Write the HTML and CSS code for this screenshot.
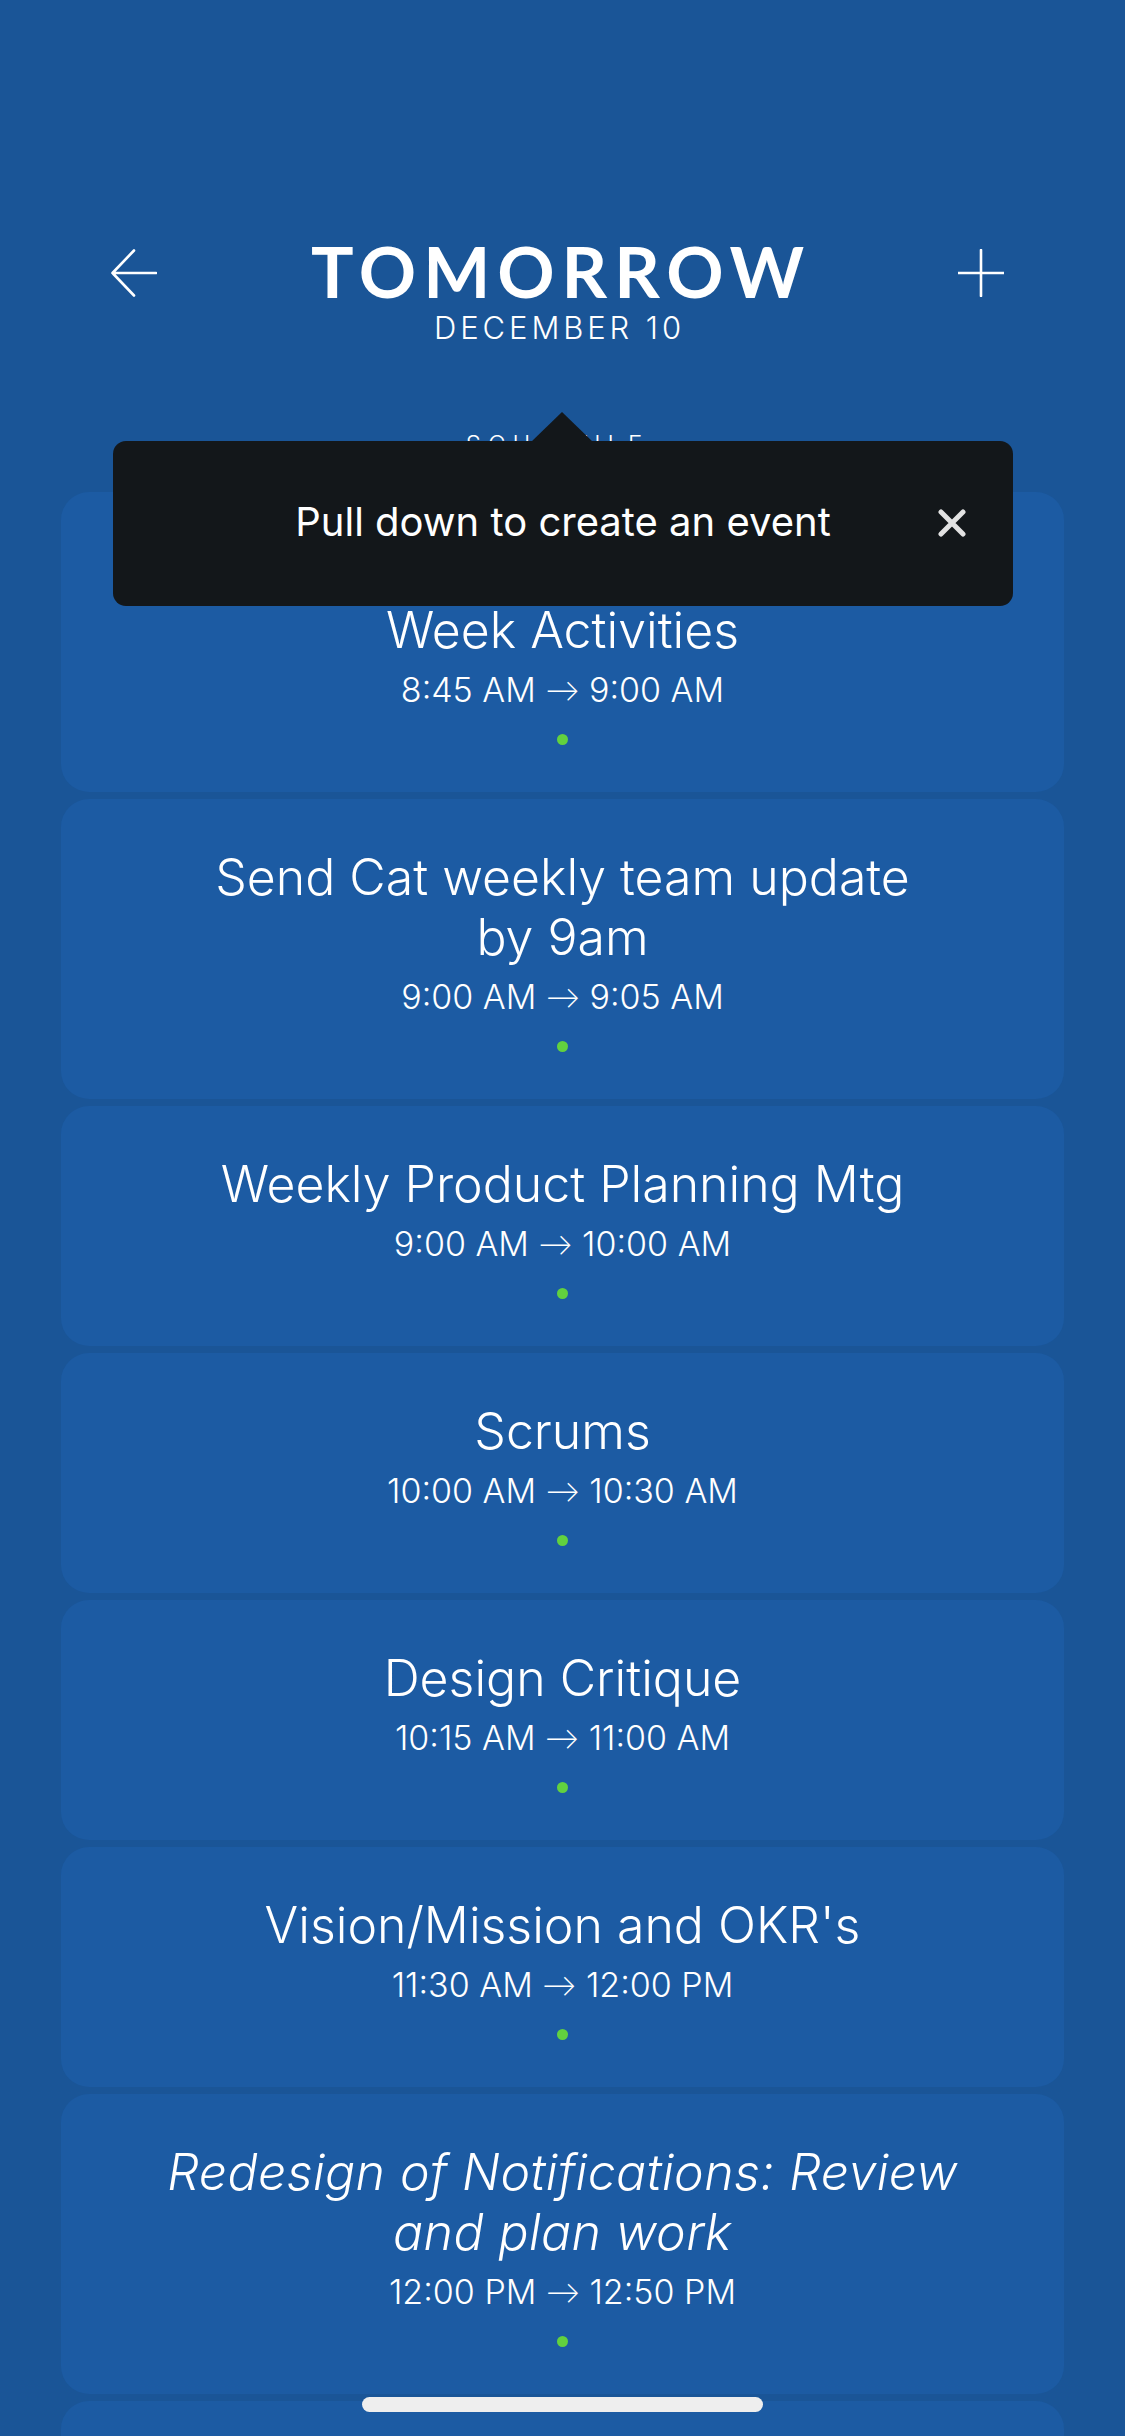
FILE: index.html
```html
<!DOCTYPE html>
<html lang="en">
<head>
<meta charset="utf-8">
<title>Tomorrow</title>
<link rel="stylesheet" href="styles.css">
</head>
<body>
<div class="screen">
  <header class="topbar">
    <div class="icon-btn">
      <svg width="46" height="48" viewBox="0 0 46 48" fill="none" stroke="#fff" stroke-width="2.6" stroke-linecap="round" stroke-linejoin="round"><path d="M23 1.5 L1.5 24 L23 46.5 M1.5 24 H45"/></svg>
    </div>
    <div class="heading">
      <h1 class="day">TOMORROW</h1>
      <div class="date">DECEMBER 10</div>
    </div>
    <div class="icon-btn">
      <svg width="46" height="48" viewBox="0 0 46 48" fill="none" stroke="#fff" stroke-width="2.6" stroke-linecap="round"><path d="M23 1 V47 M0.5 24 H45.5"/></svg>
    </div>
  </header>

  <div class="section-label">SCHEDULE</div>

  <ul class="events">
    <li class="event event--lead">
      <div class="event-title">Week Activities</div>
      <div class="event-time">8:45 AM <span class="arrow">→</span> 9:00 AM</div>
      <span class="dot"></span>
    </li>
    <li class="event">
      <div class="event-title">Send Cat weekly team update<br>by 9am</div>
      <div class="event-time">9:00 AM <span class="arrow">→</span> 9:05 AM</div>
      <span class="dot"></span>
    </li>
    <li class="event">
      <div class="event-title">Weekly Product Planning Mtg</div>
      <div class="event-time">9:00 AM <span class="arrow">→</span> 10:00 AM</div>
      <span class="dot"></span>
    </li>
    <li class="event">
      <div class="event-title">Scrums</div>
      <div class="event-time">10:00 AM <span class="arrow">→</span> 10:30 AM</div>
      <span class="dot"></span>
    </li>
    <li class="event">
      <div class="event-title">Design Critique</div>
      <div class="event-time">10:15 AM <span class="arrow">→</span> 11:00 AM</div>
      <span class="dot"></span>
    </li>
    <li class="event">
      <div class="event-title">Vision/Mission and OKR's</div>
      <div class="event-time">11:30 AM <span class="arrow">→</span> 12:00 PM</div>
      <span class="dot"></span>
    </li>
    <li class="event">
      <div class="event-title event-title--italic">Redesign of Notifications: Review<br>and plan work</div>
      <div class="event-time">12:00 PM <span class="arrow">→</span> 12:50 PM</div>
      <span class="dot"></span>
    </li>
    <li class="event event--empty"></li>
  </ul>

  <div class="tooltip">
    <span class="tooltip-caret"></span>
    <span class="tooltip-text">Pull down to create an event</span>
    <span class="tooltip-close">
      <svg width="28" height="28" viewBox="0 0 28 28" fill="none" stroke="#e2e2e2" stroke-width="5" stroke-linecap="round"><path d="M3 3 L25 25 M25 3 L3 25"/></svg>
    </span>
  </div>

  <div class="home-indicator"></div>
</div>
</body>
</html>
```

FILE: styles.css
```css
html, body {
  margin: 0;
  padding: 0;
  height: 100%;
  overflow: hidden;
}

body {
  background: #1a5597;
  color: #ffffff;
  font-family: "Inter", "Open Sans", sans-serif;
}

.screen {
  position: relative;
  min-height: 2436px;
}

.topbar {
  display: flex;
  align-items: flex-start;
  padding: 235px 121px 0 111px;
}

.icon-btn {
  width: 46px;
  height: 48px;
  margin-top: 14px;
  flex: none;
}

.icon-btn svg {
  display: block;
}

.heading {
  flex: 1;
  text-align: center;
}

.day {
  margin: 0;
  font-family: "Lato", "Inter", sans-serif;
  font-size: 71px;
  line-height: 72px;
  font-weight: 700;
  letter-spacing: 7px;
  padding-left: 7px;
}

.date {
  margin-top: 3px;
  font-size: 31px;
  line-height: 36px;
  font-weight: 300;
  letter-spacing: 3.9px;
  padding-left: 4px;
}

.section-label {
  margin-top: 84px;
  text-align: center;
  font-size: 24px;
  line-height: 30px;
  font-weight: 300;
  letter-spacing: 7px;
  padding-right: 10px;
}

.events {
  list-style: none;
  margin: 32px 61px 0;
  padding: 0;
  display: flex;
  flex-direction: column;
  gap: 7px;
}

.event {
  background: #1c5ba3;
  border-radius: 28px;
  padding: 48px 40px 47px;
  text-align: center;
  display: flex;
  flex-direction: column;
  align-items: center;
}

.event--lead {
  padding-top: 108px;
}

.event--empty {
  height: 240px;
  padding: 0;
}

.event-title {
  font-size: 50px;
  line-height: 60px;
  font-weight: 300;
}

.event-title--italic {
  font-style: italic;
  letter-spacing: 0.4px;
}

.event-time {
  margin-top: 10px;
  height: 40px;
  font-size: 34px;
  line-height: 40px;
  font-weight: 300;
}

.arrow {
  font-family: "Lato", "DejaVu Sans", sans-serif;
  font-weight: 300;
  line-height: 0;
}

.dot {
  display: block;
  margin-top: 24px;
  width: 11px;
  height: 11px;
  border-radius: 50%;
  background: #62d13f;
}

.tooltip {
  position: absolute;
  top: 441px;
  left: 113px;
  width: 900px;
  height: 165px;
  box-sizing: border-box;
  padding-bottom: 3px;
  background: #13171a;
  border-radius: 13px;
  display: flex;
  align-items: center;
  justify-content: center;
}

.tooltip-caret {
  position: absolute;
  top: -29px;
  left: 418px;
  width: 0;
  height: 0;
  border-left: 31px solid transparent;
  border-right: 31px solid transparent;
  border-bottom: 30px solid #13171a;
}

.tooltip-text {
  font-size: 40px;
  line-height: 48px;
  font-weight: 400;
  color: #ffffff;
}

.tooltip-close {
  position: absolute;
  right: 47px;
  top: 68px;
  width: 28px;
  height: 28px;
}

.tooltip-close svg {
  display: block;
}

.home-indicator {
  position: fixed;
  left: 362px;
  bottom: 24px;
  width: 401px;
  height: 15px;
  border-radius: 8px;
  background: #eeeeee;
}
```
